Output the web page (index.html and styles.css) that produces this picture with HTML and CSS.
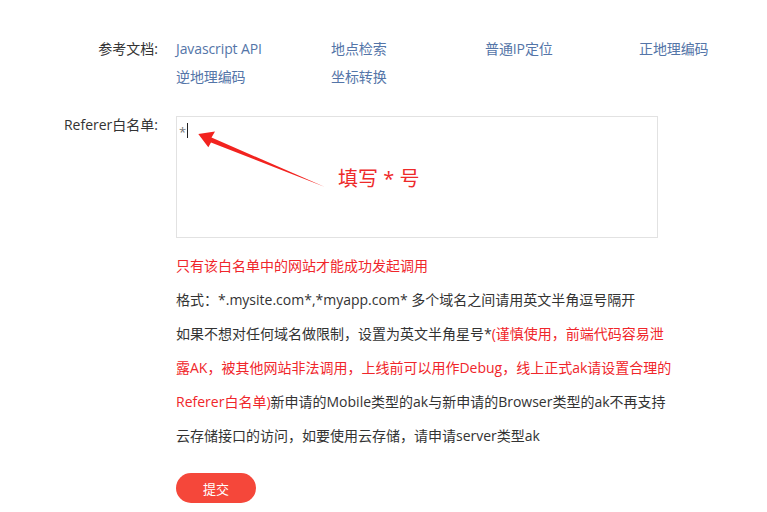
FILE: index.html
```html
<!DOCTYPE html>
<html lang="zh-CN">
<head>
<meta charset="utf-8">
<title>Referer</title>
<link rel="stylesheet" href="styles.css">
</head>
<body>
<div class="form">
  <div class="row docs-row">
    <div class="label">参考文档:</div>
    <div class="links">
      <a class="link">Javascript API</a>
      <a class="link">地点检索</a>
      <a class="link">普通IP定位</a>
      <a class="link">正地理编码</a>
      <a class="link">逆地理编码</a>
      <a class="link">坐标转换</a>
    </div>
  </div>
  <div class="row referer-row">
    <div class="label">Referer白名单:</div>
    <div class="field">
      <div class="textbox">
        <span class="value">*</span><span class="caret"></span>
        <svg class="arrow" width="160" height="80" viewBox="0 0 160 80" aria-hidden="true">
          <polygon points="22.3,18 39,15.5 35.5,21.5 149,71 35,26.5 32.3,31.3" fill="#f2231f"/>
        </svg>
        <span class="hint">填写 * 号</span>
      </div>
      <div class="notes">
        <p class="red">只有该白名单中的网站才能成功发起调用</p>
        <p>格式：*.mysite.com*,*myapp.com* 多个域名之间请用英文半角逗号隔开</p>
        <p>如果不想对任何域名做限制，设置为英文半角星号*<span class="red">(谨慎使用，前端代码容易泄</span></p>
        <p class="red">露AK，被其他网站非法调用，上线前可以用作Debug，线上正式ak请设置合理的</p>
        <p><span class="red">Referer白名单)</span>新申请的Mobile类型的ak与新申请的Browser类型的ak不再支持</p>
        <p>云存储接口的访问，如要使用云存储，请申请server类型ak</p>
      </div>
      <button class="submit" type="button">提交</button>
    </div>
  </div>
</div>
</body>
</html>
```
FILE: styles.css
```css
html, body {
  margin: 0;
  padding: 0;
  background: #ffffff;
}
body {
  font-family: "Open Sans", "Noto Sans", "Noto Sans CJK SC", sans-serif;
  font-size: 14px;
  color: #333333;
}
.form {
  padding-top: 35px;
}
.row {
  display: grid;
  grid-template-columns: 158px 1fr;
  column-gap: 18px;
}
.label {
  text-align: right;
  line-height: 28px;
  color: #333333;
  white-space: nowrap;
}
.links {
  display: grid;
  grid-template-columns: 155px 154px 154px 120px;
  grid-auto-rows: 28px;
  align-items: center;
}
.link {
  color: #5475a8;
  text-decoration: none;
  white-space: nowrap;
  line-height: 28px;
  letter-spacing: -0.1px;
}
.referer-row {
  margin-top: 25px;
}
.referer-row .label {
  line-height: 18px;
}
.field {
  display: flex;
  flex-direction: column;
  align-items: flex-start;
}
.textbox {
  position: relative;
  box-sizing: border-box;
  width: 482px;
  height: 122px;
  border: 1px solid #e2e2e2;
  padding: 4px 2px;
  line-height: 16px;
  color: #777777;
  font-size: 13px;
  display: flex;
  align-items: flex-start;
}
.value {
  line-height: 18px;
  margin-top: 2px;
}
.caret {
  display: inline-block;
  width: 0;
  height: 15px;
  border-left: 1px solid #222;
  margin-left: 1px;
  margin-top: 2px;
}
.arrow {
  position: absolute;
  left: -1px;
  top: -1px;
}
.hint {
  position: absolute;
  left: 161px;
  top: 50px;
  font-size: 20px;
  line-height: 24px;
  color: #ee2a2a;
  white-space: nowrap;
}
.notes {
  margin-top: 11px;
}
.notes p {
  margin: 0;
  line-height: 34px;
  white-space: nowrap;
}
.red {
  color: #f0262b;
}
.submit {
  margin-top: 20px;
  width: 80px;
  height: 30px;
  border: none;
  border-radius: 15px;
  background: #f5473a;
  color: #ffffff;
  font-family: "Noto Sans CJK SC", sans-serif;
  font-size: 13px;
  padding: 0;
  cursor: pointer;
}
```
